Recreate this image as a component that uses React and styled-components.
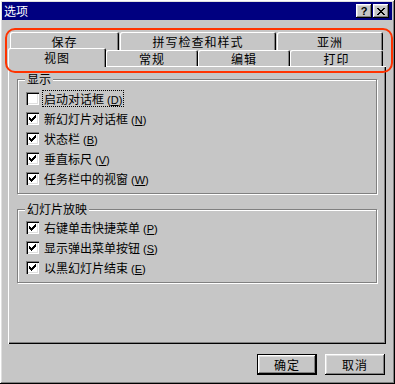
import styled, { createGlobalStyle, css } from "styled-components";

const GlobalStyle = createGlobalStyle`
  body {
    margin: 0;
    background: #c6c6c6;
    font-family: "Noto Sans CJK SC", "DejaVu Sans", sans-serif;
  }
`;

const bevelOut = css`
  box-shadow: inset -1px -1px #000, inset 1px 1px #fff, inset -2px -2px #808080,
    inset 2px 2px #dfdfdf;
`;

const Window = styled.div`
  position: relative;
  box-sizing: border-box;
  width: 395px;
  height: 384px;
  padding: 2px 3px 2px 2px;
  background: #c6c6c6;
  display: flex;
  flex-direction: column;
  ${bevelOut}
`;

const TitleBar = styled.div`
  height: 18px;
  padding: 0 3px 0 2px;
  background: #000080;
  color: #fff;
  display: flex;
  align-items: center;
  justify-content: space-between;
  font-size: 12px;
  line-height: 14px;
`;

const TitleButtons = styled.div`
  display: flex;
  gap: 1px;
`;

const TitleButton = styled.div`
  width: 16px;
  height: 14px;
  background: #c6c6c6;
  color: #000;
  display: flex;
  align-items: center;
  justify-content: center;
  font: bold 11px "Liberation Sans", sans-serif;
  ${bevelOut}
`;

const Content = styled.div`
  padding: 12px 0 0 6px;
  display: flex;
  flex-direction: column;
`;

const TabRow = styled.div`
  display: flex;
  align-items: flex-start;
  gap: ${(p) => p.$gap || 0}px;
  height: 18px;
  padding-left: ${(p) => p.$indent || 0}px;
  margin-top: ${(p) => p.$overlap || 0}px;
`;

const Tab = styled.div`
  position: relative;
  box-sizing: border-box;
  width: ${(p) => p.$w}px;
  height: ${(p) => (p.$active ? 19 : 18)}px;
  margin-top: ${(p) => (p.$front && !p.$active ? 2 : 0)}px;
  ${(p) => p.$front && !p.$active && "height: 16px;"}
  z-index: ${(p) => (p.$active ? 2 : 0)};
  background: #c6c6c6;
  border-radius: 2px 2px 0 0;
  box-shadow: inset 1px 1px #fff, inset -1px 0 #000, inset -2px 0 #808080;
  display: flex;
  align-items: center;
  justify-content: center;
  font-size: 12px;
  letter-spacing: 1px;
  color: #000;
`;

const Panel = styled.div`
  box-sizing: border-box;
  width: 378px;
  height: 278px;
  padding: 6px 9px 0 9px;
  display: flex;
  flex-direction: column;
  gap: 8px;
  box-shadow: inset 1px 1px #fff, inset -1px -1px #000, inset -2px -2px #808080;
`;

const Group = styled.fieldset`
  margin: 0;
  padding: ${(p) => p.$top}px 8px 5px 8px;
  border: 1px solid #808080;
  box-shadow: 1px 1px 0 #fff, inset 1px 1px 0 #fff;
  min-inline-size: 0;
`;

const Legend = styled.legend`
  padding: 0 2px;
  margin-left: -1px;
  background: #c6c6c6;
  font-size: 12px;
  line-height: 14px;
  position: relative;
  z-index: 1;
`;

const Row = styled.div`
  height: 20px;
  display: flex;
  align-items: center;
  gap: 4px;
  font-size: 12px;
  color: #000;
`;

const Box = styled.span`
  width: 13px;
  height: 13px;
  flex: none;
  background: #fff;
  display: flex;
  align-items: center;
  justify-content: center;
  box-shadow: inset 1px 1px #808080, inset 2px 2px #000, inset -1px -1px #fff,
    inset -2px -2px #dfdfdf;
`;

const Label = styled.span`
  padding: 0 1px;
  line-height: 15px;
  outline: ${(p) => (p.$focus ? "1px dotted #000" : "none")};
`;

const Key = styled.span`
  font: 11px "Liberation Sans", sans-serif;
  margin-left: 3px;
`;

const Footer = styled.div`
  display: flex;
  justify-content: flex-end;
  gap: 8px;
  width: 377px;
  margin-top: 10px;
`;

const Button = styled.div`
  box-sizing: border-box;
  width: 60px;
  height: 21px;
  display: flex;
  align-items: center;
  justify-content: center;
  font-size: 12px;
  letter-spacing: 1px;
  background: #c6c6c6;
  ${bevelOut}
  ${(p) =>
    p.$default &&
    css`
      border: 1px solid #000;
    `}
`;

const Highlight = styled.div`
  position: absolute;
  left: 5px;
  top: 28px;
  width: 388px;
  height: 45px;
  box-sizing: border-box;
  border: 2px solid #ff3300;
  border-radius: 10px;
  pointer-events: none;
  z-index: 5;
`;

const Check = () => (
  <svg width="7" height="7" viewBox="0 0 7 7" shapeRendering="crispEdges">
    <path
      d="M0 2h1v3H0zM1 3h1v3H1zM2 4h1v3H2zM3 3h1v3H3zM4 2h1v3H4zM5 1h1v3H5zM6 0h1v3H6z"
      fill="#000"
    />
  </svg>
);

const CloseGlyph = () => (
  <svg width="8" height="7" viewBox="0 0 8 7" shapeRendering="crispEdges">
    <path
      d="M0 0h2v1h1v1h2V1h1V0h2v1H7v1H6v1H5v1h1v1h1v1h1v1H6V6H5V5H3v1H2v1H0V6h1V5h1V4h1V3H2V2H1V1H0z"
      fill="#000"
    />
  </svg>
);

function Option({ text, k, checked, focus }) {
  return (
    <Row>
      <Box>{checked && <Check />}</Box>
      <Label $focus={focus}>
        {text}
        <Key>
          (<u>{k}</u>)
        </Key>
      </Label>
    </Row>
  );
}

const display = [
  { text: "启动对话框", k: "D", checked: false, focus: true },
  { text: "新幻灯片对话框", k: "N", checked: true },
  { text: "状态栏", k: "B", checked: true },
  { text: "垂直标尺", k: "V", checked: true },
  { text: "任务栏中的视窗", k: "W", checked: true },
];

const show = [
  { text: "右键单击快捷菜单", k: "P", checked: true },
  { text: "显示弹出菜单按钮", k: "S", checked: true },
  { text: "以黑幻灯片结束", k: "E", checked: true },
];

export default function App() {
  return (
    <>
      <GlobalStyle />
      <Window>
        <TitleBar>
          <span>选项</span>
          <TitleButtons>
            <TitleButton>?</TitleButton>
            <TitleButton>
              <CloseGlyph />
            </TitleButton>
          </TitleButtons>
        </TitleBar>
        <Content>
          <TabRow $indent={2} $gap={1}>
            <Tab $w={109}>保存</Tab>
            <Tab $w={156}>拼写检查和样式</Tab>
            <Tab $w={106}>亚洲</Tab>
          </TabRow>
          <TabRow $overlap={-2}>
            <Tab $w={98} $front $active>
              视图
            </Tab>
            <Tab $w={92} $front>
              常规
            </Tab>
            <Tab $w={92} $front>
              编辑
            </Tab>
            <Tab $w={93} $front>
              打印
            </Tab>
          </TabRow>
          <Panel>
            <Group $top={2}>
              <Legend>显示</Legend>
              {display.map((o) => (
                <Option key={o.k} {...o} />
              ))}
            </Group>
            <Group $top={1}>
              <Legend>幻灯片放映</Legend>
              {show.map((o) => (
                <Option key={o.k} {...o} />
              ))}
            </Group>
          </Panel>
          <Footer>
            <Button $default>确定</Button>
            <Button>取消</Button>
          </Footer>
        </Content>
        <Highlight />
      </Window>
    </>
  );
}
